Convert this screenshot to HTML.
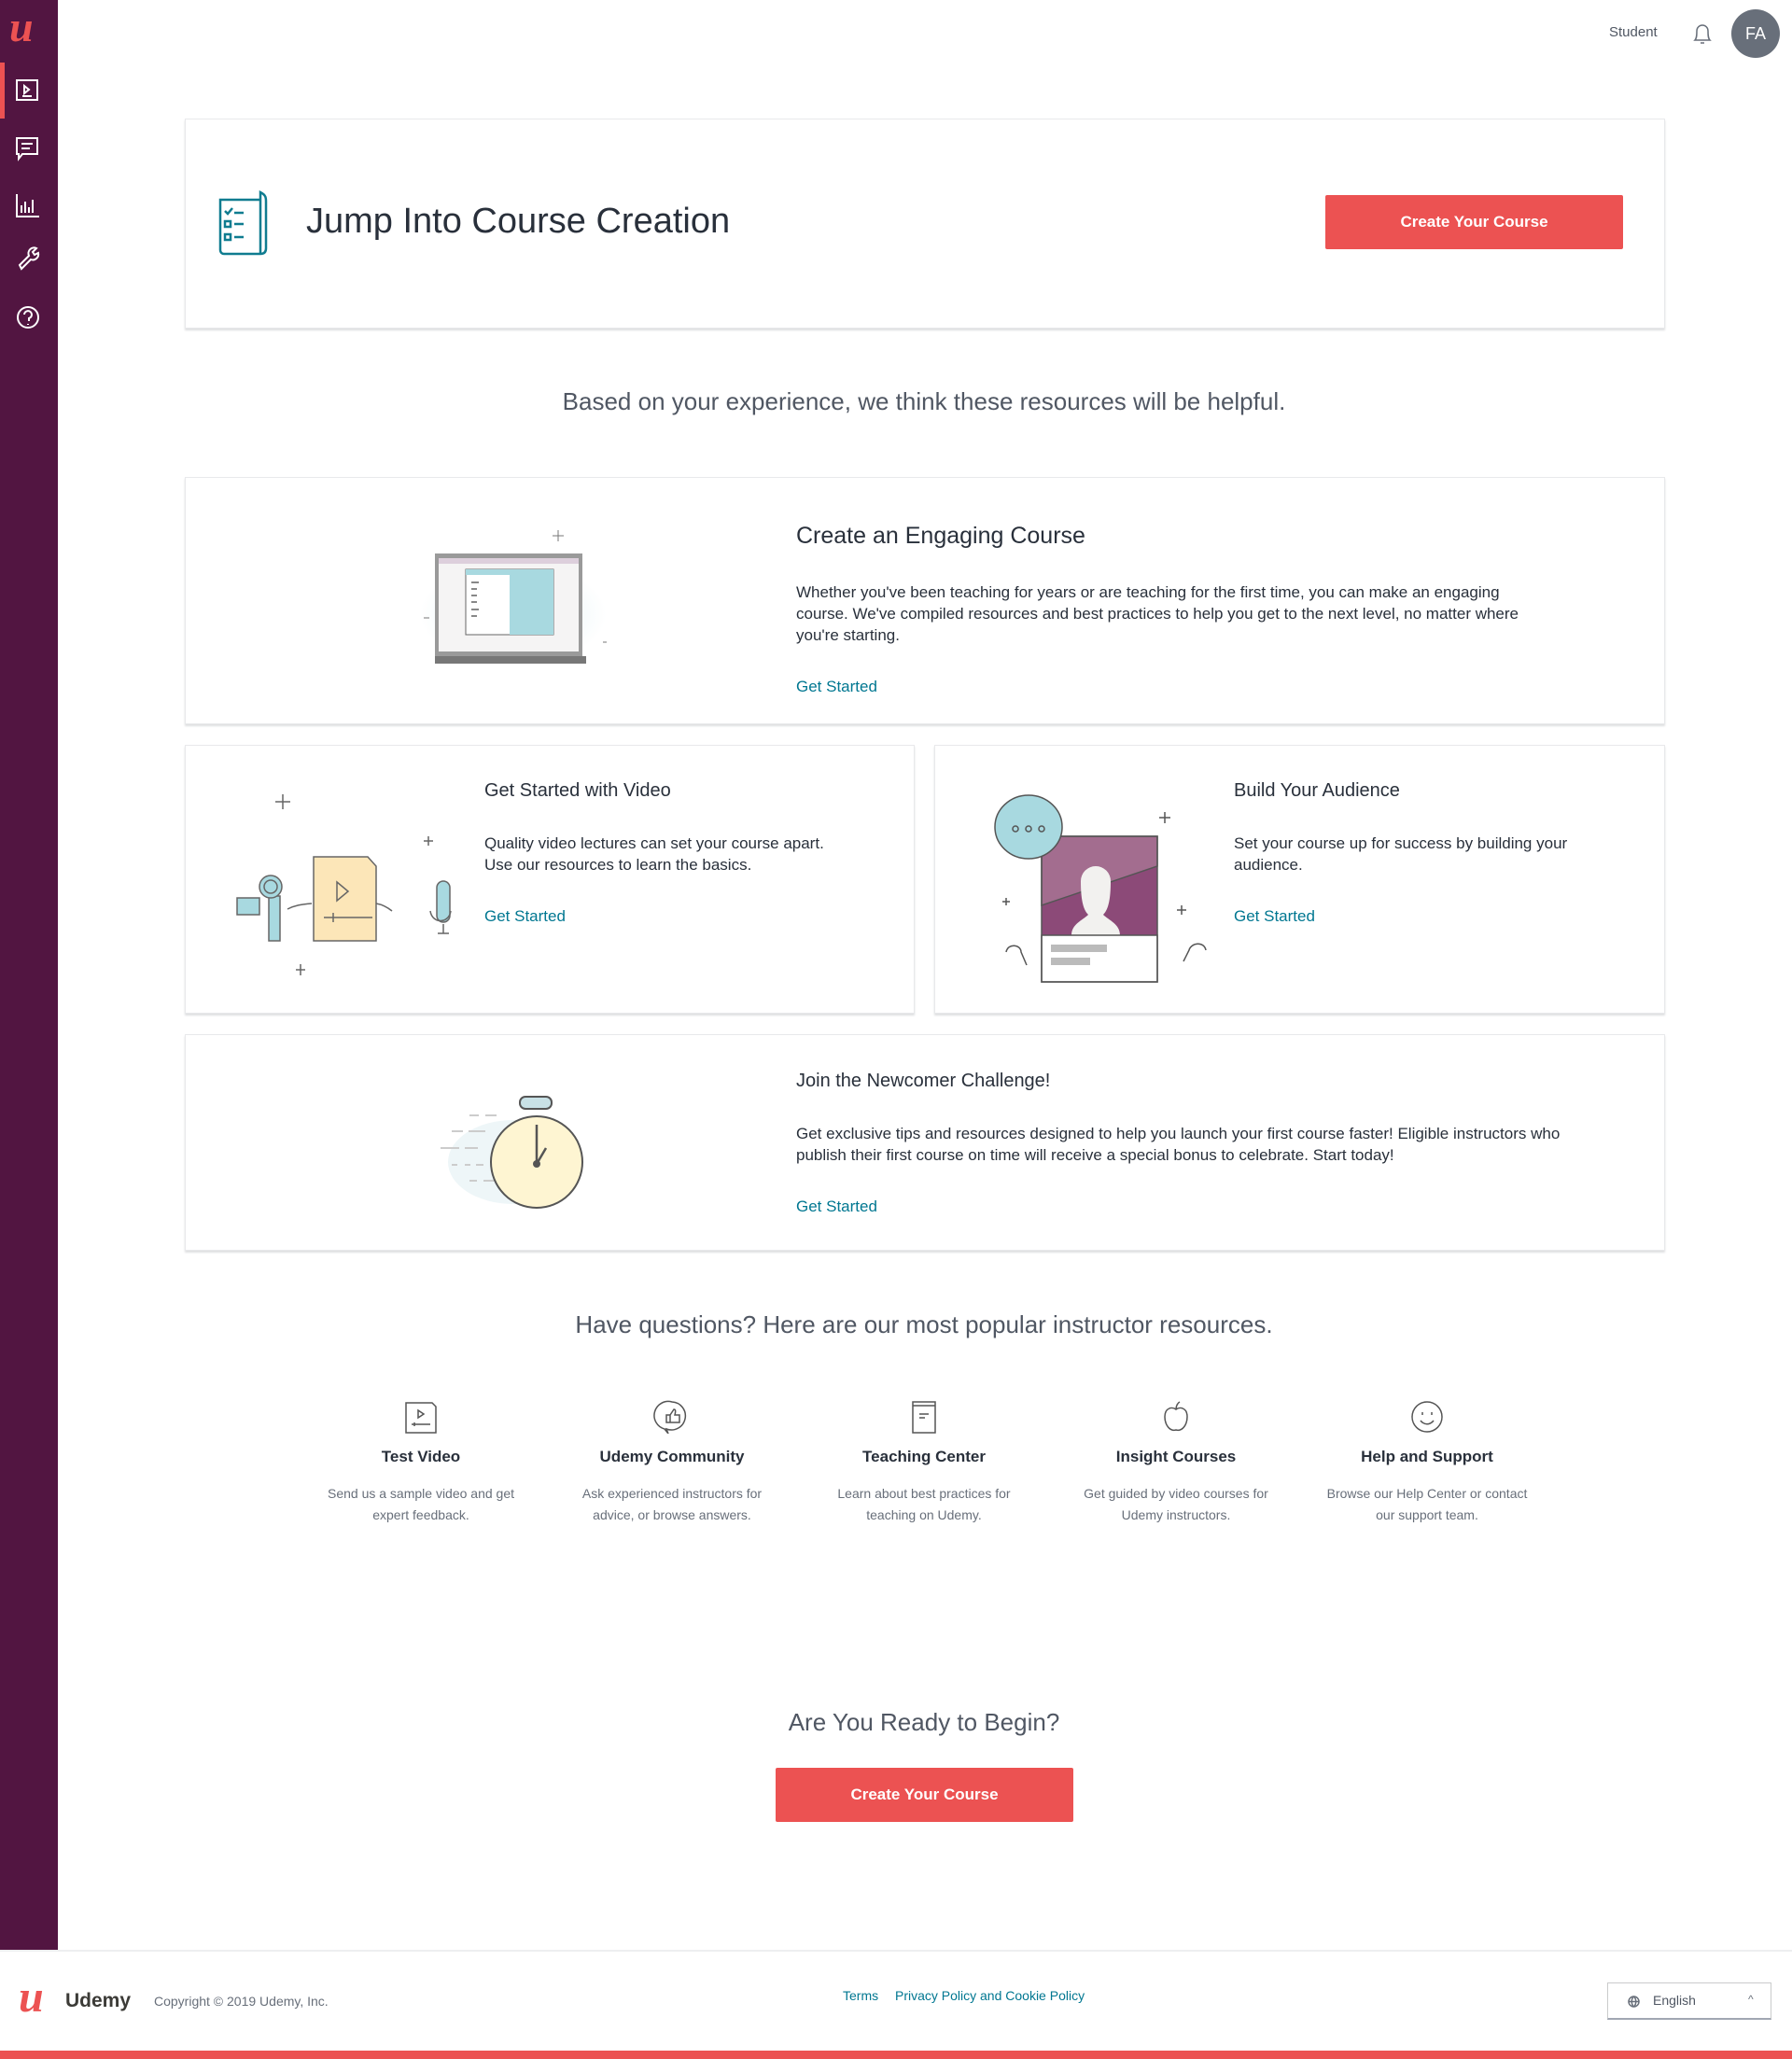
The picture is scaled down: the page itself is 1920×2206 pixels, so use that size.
<!DOCTYPE html>
<html><head><meta charset="utf-8">
<style>
*{margin:0;padding:0;box-sizing:border-box}
body{width:1920px;height:2206px;position:relative;background:#fff;font-family:"Liberation Sans",sans-serif;color:#29303b;overflow:hidden}
.abs{position:absolute}
.side{left:0;top:0;width:62px;height:2090px;background:#521541}
.card{position:absolute;background:#fff;border:1px solid #e8e9eb;box-shadow:0 2px 2px #dedfe0}
.btn{position:absolute;background:#ec5252;color:#fff;font-weight:bold;font-size:17px;display:flex;align-items:center;justify-content:center;border-radius:2px}
.t{position:absolute;white-space:nowrap}
.h{font-size:25px;color:#29303b}
.h2{font-size:20px;color:#29303b}
.p{font-size:17px;line-height:23px;color:#29303b;white-space:normal}
.lnk{font-size:17px;color:#007791}
.res{position:absolute;width:240px;text-align:center}
.res b{display:block;font-size:17px;font-weight:bold;color:#29303b;margin-top:10px}
.res p{font-size:14px;line-height:23px;color:#686f7a;margin-top:18px}
</style></head><body>
<div class="abs side"></div>
<div class="abs" style="left:0;top:67px;width:5px;height:60px;background:#ec5252"></div>
<div class="t" style="left:10px;top:2px;font:italic bold 46px 'Liberation Serif',serif;color:#ec5252">u</div>
<svg class="abs" style="left:14px;top:82px" width="32" height="280" fill="none" stroke="#fff" stroke-width="2">
<rect x="4" y="4" width="22" height="21"/><path d="M12 10l5 4-5 4z" /><path d="M10 21h10"/>
<path d="M4 66h22v17H10l-4 5v-5H4z"/><path d="M9 72h12M9 77h9"/>
<path d="M4 126v24h24M9 146v-8M13 146v-12M17 146v-6M21 146v-14"/>
<path d="M7 202l10-10a6 6 0 0 1 8-8l-4 4 2 3 4-2a6 6 0 0 1-8 7l-10 10z"/>
<circle cx="16" cy="258" r="11"/><path d="M12 255a4 4 0 1 1 5 4v3M16 265v1"/>
</svg>
<div class="t" style="left:1724px;top:26px;font-size:15px;color:#505763">Student</div>
<svg class="abs" style="left:1812px;top:23px" width="24" height="26" fill="none" stroke="#686f7a" stroke-width="1.5"><path d="M4 20c2-2 2-6 2-10a6 6 0 0 1 12 0c0 4 0 8 2 10zM10 23h4"/></svg>
<div class="abs" style="left:1855px;top:10px;width:52px;height:52px;border-radius:50%;background:#686f7a;color:#fff;font-size:18px;display:flex;align-items:center;justify-content:center">FA</div>

<div class="card" style="left:198px;top:127px;width:1586px;height:225px"></div>
<svg class="abs" style="left:233px;top:204px" width="60" height="72" fill="none" stroke="#0f7c90" stroke-width="2.5"><path d="M3 10h43v58H7a4 4 0 0 1-4-4zM46 10V2c6 3 6 6 6 10v50c0 4-2 6-6 6"/><path d="M8 22l3 3 5-6M8 33h6v6H8zM8 47h6v6H8zM18 24h10M18 36h10M18 50h10"/></svg>
<div class="t" style="left:328px;top:216px;font-size:38px;font-weight:300;color:#29303b">Jump Into Course Creation</div>
<div class="btn" style="left:1420px;top:209px;width:319px;height:58px">Create Your Course</div>

<div class="t" style="left:0;width:1980px;text-align:center;top:415px;font-size:26px;color:#505763">Based on your experience, we think these resources will be helpful.</div>

<div class="card" style="left:198px;top:511px;width:1586px;height:265px"></div>
<svg class="abs" style="left:440px;top:558px" width="220" height="156"><defs><radialGradient id="g"><stop offset="0" stop-color="#dff1f4"/><stop offset="1" stop-color="#fff"/></radialGradient></defs>
<ellipse cx="110" cy="100" rx="100" ry="55" fill="url(#g)"/>
<rect x="26" y="35" width="158" height="113" fill="#9a9a9a"/><rect x="30" y="40" width="150" height="100" fill="#f5f4f4"/>
<rect x="30" y="40" width="150" height="6" fill="#ddcfdc"/>
<rect x="59" y="52" width="94" height="70" fill="#fff" stroke="#666"/><rect x="59" y="52" width="94" height="6" fill="#a8d9e0"/><rect x="106" y="58" width="47" height="64" fill="#a8d9e0"/>
<path d="M65 66h8M65 73h6M65 80h6M65 87h6M65 95h8M65 102h6" stroke="#888" stroke-width="2"/>
<rect x="26" y="145" width="162" height="8" fill="#777"/><path d="M158 10v12M152 16h12M14 104h6M206 130h4" stroke="#777"/></svg>
<div class="t h" style="left:853px;top:560px">Create an Engaging Course</div>
<div class="t p" style="left:853px;top:623px;width:790px;font-size:17px">Whether you've been teaching for years or are teaching for the first time, you can make an engaging course. We've compiled resources and best practices to help you get to the next level, no matter where you're starting.</div>
<div class="t lnk" style="left:853px;top:726px">Get Started</div>

<div class="card" style="left:198px;top:798px;width:782px;height:288px"></div>
<div class="card" style="left:1001px;top:798px;width:783px;height:288px"></div>
<svg class="abs" style="left:250px;top:840px" width="250" height="220" fill="none" stroke="#666" stroke-width="1.5">
<path d="M53 11v16M45 19h16M209 56v10M204 61h10M72 193v12M67 199h10"/>
<path d="M86 78h58l9 10v80H86z" fill="#fce6b8"/><path d="M111 105l12 10-12 10z"/><path d="M97 143h52M107 138v10"/>
<path d="M58 134c8-4 14-5 26-6M153 128c6 1 12 4 17 8"/>
<rect x="4" y="122" width="24" height="18" fill="#a8d9e0"/><rect x="38" y="120" width="12" height="48" fill="#a8d9e0"/><circle cx="40" cy="110" r="12" fill="#a8d9e0"/><circle cx="40" cy="110" r="7"/>
<rect x="218" y="104" width="14" height="44" rx="7" fill="#a8d9e0"/><path d="M211 136c2 14 20 14 22 0M225 150v10M219 160h12"/></svg>
<div class="t h2" style="left:519px;top:836px">Get Started with Video</div>
<div class="t p" style="left:519px;top:892px">Quality video lectures can set your course apart.<br>Use our resources to learn the basics.</div>
<div class="t lnk" style="left:519px;top:972px">Get Started</div>

<svg class="abs" style="left:1060px;top:850px" width="240" height="230" fill="none" stroke="#555" stroke-width="1.5">
<rect x="56" y="46" width="124" height="106" fill="#8c4a78" stroke="none"/><path d="M56 46h124v32L56 120z" fill="#a36d8f"/>
<path d="M88 152c0-12 12-16 18-22-6-6-8-18-8-36a16 16 0 0 1 32 0c0 18-2 30-8 36 6 6 18 10 18 22z" fill="#f2f1ef" stroke="none"/>
<rect x="56" y="152" width="124" height="50" fill="#fff"/><rect x="56" y="46" width="124" height="156" fill="none"/>
<rect x="66" y="162" width="60" height="8" fill="#bbb" stroke="none"/><rect x="66" y="176" width="42" height="8" fill="#bbb" stroke="none"/>
<ellipse cx="42" cy="36" rx="36" ry="34" fill="#a8d9e0"/><circle cx="28" cy="38" r="3"/><circle cx="42" cy="38" r="3"/><circle cx="56" cy="38" r="3"/>
<path d="M188 20v12M182 26h12M18 112v8M14 116h8M206 120v10M201 125h10M18 170c2-10 16-8 16 0l6 14M232 168c-2-10-16-8-18 0l-6 12"/></svg>
<div class="t h2" style="left:1322px;top:836px">Build Your Audience</div>
<div class="t p" style="left:1322px;top:892px">Set your course up for success by building your<br>audience.</div>
<div class="t lnk" style="left:1322px;top:972px">Get Started</div>

<div class="card" style="left:198px;top:1108px;width:1586px;height:232px"></div>
<svg class="abs" style="left:470px;top:1170px" width="160" height="130" fill="none">
<ellipse cx="80" cy="75" rx="70" ry="45" fill="#eef6f8"/>
<path d="M33 25h10M50 25h12M14 42h12M32 42h18M2 60h20M28 60h14M14 78h6M28 78h6M40 78h8M33 95h8M48 95h12" stroke="#ccc" stroke-width="2"/>
<rect x="87" y="5" width="34" height="13" rx="6" fill="#c8e1e6" stroke="#555" stroke-width="2"/>
<circle cx="105" cy="75" r="49" fill="#fef5d2" stroke="#555" stroke-width="2"/>
<path d="M105 77V35M105 77l10-17" stroke="#555" stroke-width="2.5"/><circle cx="105" cy="77" r="4" fill="#555"/></svg>
<div class="t h2" style="left:853px;top:1147px">Join the Newcomer Challenge!</div>
<div class="t p" style="left:853px;top:1203px">Get exclusive tips and resources designed to help you launch your first course faster! Eligible instructors who<br>publish their first course on time will receive a special bonus to celebrate. Start today!</div>
<div class="t lnk" style="left:853px;top:1283px">Get Started</div>

<div class="t" style="left:0;width:1980px;text-align:center;top:1404px;font-size:26px;color:#505763">Have questions? Here are our most popular instructor resources.</div>

<div class="res" style="left:331px;top:1500px"><svg width="40" height="36" fill="none" stroke="#555" stroke-width="1.5"><path d="M4 3h28l4 4v28H4zM17 11l6 4-6 4zM10 26h20M13 24v4"/></svg><b>Test Video</b><p>Send us a sample video and get<br>expert feedback.</p></div>
<div class="res" style="left:600px;top:1500px"><svg width="40" height="36" fill="none" stroke="#555" stroke-width="1.5"><path d="M20 2a15 15 0 1 1-6 29l2 5-4-5A15 15 0 0 1 20 2z"/><path d="M14 16h4v8h-4zM18 16l4-6c2 0 2 2 1 6h5v8h-10"/></svg><b>Udemy Community</b><p>Ask experienced instructors for<br>advice, or browse answers.</p></div>
<div class="res" style="left:870px;top:1500px"><svg width="40" height="36" fill="none" stroke="#555" stroke-width="1.5"><path d="M8 2h24v33H8zM8 6h24M15 15h10M15 19h6"/></svg><b>Teaching Center</b><p>Learn about best practices for<br>teaching on Udemy.</p></div>
<div class="res" style="left:1140px;top:1500px"><svg width="40" height="36" fill="none" stroke="#555" stroke-width="1.5"><path d="M20 10c-4-3-12-2-12 8 0 8 5 16 12 14 7 2 12-6 12-14 0-10-8-11-12-8zM20 10c0-4 2-7 4-8"/></svg><b>Insight Courses</b><p>Get guided by video courses for<br>Udemy instructors.</p></div>
<div class="res" style="left:1409px;top:1500px"><svg width="40" height="36" fill="none" stroke="#555" stroke-width="1.5"><circle cx="20" cy="18" r="16"/><path d="M15 13v3M25 13v3M13 22c4 5 10 5 14 0"/></svg><b>Help and Support</b><p>Browse our Help Center or contact<br>our support team.</p></div>

<div class="t" style="left:0;width:1980px;text-align:center;top:1830px;font-size:26px;color:#505763">Are You Ready to Begin?</div>
<div class="btn" style="left:831px;top:1894px;width:319px;height:58px">Create Your Course</div>

<div class="abs" style="left:0;top:2089px;width:1920px;height:2px;background:#eeeff0"></div>
<div class="t" style="left:20px;top:2112px;font:italic bold 48px 'Liberation Serif',serif;color:#ec5252">u</div>
<div class="t" style="left:70px;top:2132px;font-size:21px;font-weight:bold;color:#3c3b37">Udemy</div>
<div class="t" style="left:165px;top:2136px;font-size:14px;color:#686f7a">Copyright © 2019 Udemy, Inc.</div>
<div class="t" style="left:903px;top:2130px;font-size:14px;color:#007791">Terms</div>
<div class="t" style="left:959px;top:2130px;font-size:14px;color:#007791">Privacy Policy and Cookie Policy</div>
<div class="abs" style="left:1722px;top:2124px;width:176px;height:40px;border:1px solid #cacbcc;border-bottom:2px solid #a1a7b3"></div>
<svg class="abs" style="left:1744px;top:2138px" width="13" height="13" fill="none" stroke="#686f7a" stroke-width="1.5"><circle cx="6.5" cy="6.5" r="5.5"/><path d="M1 6.5h11M6.5 1c-3 3-3 8 0 11M6.5 1c3 3 3 8 0 11"/></svg>
<div class="t" style="left:1771px;top:2135px;font-size:14px;color:#505763">English</div>
<div class="t" style="left:1873px;top:2135px;font-size:12px;color:#686f7a">^</div>
<div class="abs" style="left:0;top:2197px;width:1920px;height:9px;background:#ec5252"></div>
</body></html>
